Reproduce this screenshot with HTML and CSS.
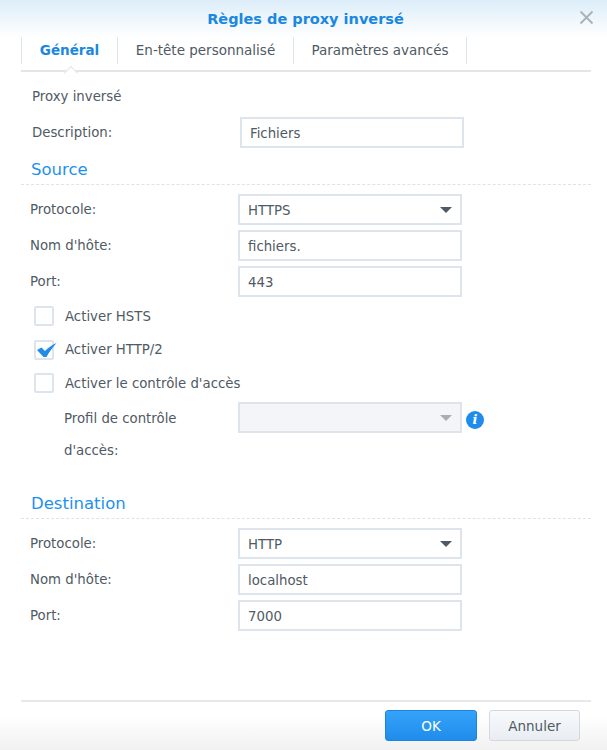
FILE: index.html
```html
<!DOCTYPE html>
<html lang="fr">
<head>
<meta charset="utf-8">
<title>Règles de proxy inversé</title>
<link rel="stylesheet" href="styles.css">
</head>
<body>
<div class="dialog">
  <header class="titlebar">
    <h1 class="title">Règles de proxy inversé</h1>
    <svg class="close" width="15" height="15" viewBox="0 0 15 15"><path d="M1.5 1.5l12 12M13.5 1.5l-12 12" stroke="#a9b1b8" stroke-width="1.8" fill="none"/></svg>
  </header>
  <nav class="tabs">
    <span class="tab tab-active">Général</span>
    <span class="tab tab-header">En-tête personnalisé</span>
    <span class="tab tab-advanced">Paramètres avancés</span>
  </nav>
  <main class="body">
    <div class="intro">
      <div class="intro-title">Proxy inversé</div>
      <div class="row row-desc">
        <span class="label">Description:</span>
        <span class="field field-desc">Fichiers</span>
      </div>
    </div>
    <section class="group group-source">
      <h2 class="heading">Source</h2>
      <div class="rows">
        <div class="row"><span class="label">Protocole:</span><span class="field">HTTPS<i class="caret"></i></span></div>
        <div class="row"><span class="label">Nom d'hôte:</span><span class="field">fichiers.</span></div>
        <div class="row"><span class="label">Port:</span><span class="field">443</span></div>
      </div>
      <div class="checks">
        <div class="check"><span class="box"></span>Activer HSTS</div>
        <div class="check"><span class="box"><svg class="tick" width="26" height="24" viewBox="0 0 26 24"><path d="M3 10L7.500 7.500L11 11C14.500 7.500 18 5 22.500 3C18 8 15 12.500 12.500 17L9.500 17Z" fill="#1f8ceb"/></svg></span>Activer HTTP/2</div>
        <div class="check"><span class="box"></span>Activer le contrôle d'accès</div>
      </div>
      <div class="profile">
        <span class="profile-label">Profil de contrôle d'accès:</span>
        <span class="field field-off"><i class="caret caret-off"></i></span>
        <span class="info">i</span>
      </div>
    </section>
    <section class="group group-dest">
      <h2 class="heading">Destination</h2>
      <div class="rows">
        <div class="row"><span class="label">Protocole:</span><span class="field">HTTP<i class="caret"></i></span></div>
        <div class="row"><span class="label">Nom d'hôte:</span><span class="field">localhost</span></div>
        <div class="row"><span class="label">Port:</span><span class="field">7000</span></div>
      </div>
    </section>
  </main>
  <footer class="footer">
    <button class="btn btn-ok">OK</button>
    <button class="btn btn-cancel">Annuler</button>
  </footer>
</div>
</body>
</html>
```
FILE: styles.css
```css
* { box-sizing: border-box; }
html, body { margin: 0; padding: 0; }
body {
  width: 607px;
  height: 750px;
  overflow: hidden;
  background: #fff;
  font-family: "DejaVu Sans", Verdana, sans-serif;
  font-size: 13.3px;
  color: #505a64;
}
.dialog { width: 607px; height: 750px; display: flex; flex-direction: column; }

.titlebar {
  height: 37px;
  flex: none;
  display: flex;
  align-items: center;
  justify-content: center;
  position: relative;
  background: linear-gradient(#dcedf9, #ffffff);
}
.title { margin: 0; padding-left: 4px; font-size: 14.5px; font-weight: 700; color: #1a87e0; }
.close { position: absolute; left: 579px; top: 10px; }

.tabs {
  height: 35px;
  flex: none;
  margin: 0 16px 0 21px;
  padding-bottom: 8px;
  display: flex;
  border-bottom: 2px solid #e3e6e9;
  position: relative;
  font-size: 13.5px;
}
.tab {
  height: 27px;
  display: flex;
  align-items: center;
  justify-content: center;
  padding-bottom: 2px;
  border-right: 1px solid #dde4ea;
}
.tab-header { width: 176px; }
.tab-advanced { width: 173px; }
.tab-active {
  width: 97px;
  border-left: 1px solid #dde4ea;
  color: #1a87e0;
  font-weight: 700;
  position: relative;
}
.tab-active::after {
  content: "";
  position: absolute;
  left: 44px;
  top: 31px;
  width: 9px;
  height: 9px;
  background: #fff;
  border-left: 1px solid #e3e6e9;
  border-top: 1px solid #e3e6e9;
  transform: rotate(45deg);
}

.body { flex: 1; padding: 0 16px 0 21px; }
.intro { padding: 0 0 0 11px; }
.intro-title { height: 18px; line-height: 18px; margin-top: 16px; }
.row { display: flex; align-items: flex-start; height: 31px; }
.row-desc { margin-top: 11px; }
.label { width: 208px; line-height: 32px; }
.field {
  width: 224px;
  height: 31px;
  line-height: 29px;
  padding-left: 8px;
  background: #fff;
  border: 2px solid #dde4ec;
  position: relative;
  display: block;
}
.group-source { margin-top: 8px; }
.group-dest { margin-top: 23px; }
.heading {
  margin: 0;
  height: 29px;
  padding: 0 0 0 10px;
  font-size: 16.5px;
  font-weight: 400;
  line-height: 28px;
  color: #1e90f0;
  border-bottom: 1px dashed #dce3e9;
}
.rows { padding: 9px 0 0 9px; display: flex; flex-direction: column; gap: 5px; }
.caret {
  position: absolute;
  right: 8px;
  top: 11px;
  width: 0;
  height: 0;
  border-left: 6px solid transparent;
  border-right: 6px solid transparent;
  border-top: 6px solid #505a64;
}
.caret-off { border-top-color: #a8aeb4; }
.checks { padding: 9px 0 0 13px; display: flex; flex-direction: column; gap: 13.7px; }
.check { display: flex; align-items: center; height: 20px; }
.box {
  width: 20px;
  height: 20px;
  margin-right: 11px;
  border: 2px solid #dde4ec;
  border-radius: 2px;
  position: relative;
  flex: none;
}
.tick { position: absolute; left: -2px; top: -2px; }
.profile { display: flex; padding: 9px 0 0 9px; position: relative; }
.profile-label { width: 208px; padding: 1px 31px 0 34px; line-height: 32px; }
.field-off { background: #f3f5f8; flex: none; }
.info {
  width: 18px;
  height: 18px;
  margin: 9px 0 0 4px;
  border-radius: 50%;
  background: #1f8ceb;
  color: #fff;
  font: italic 700 13px/18px "DejaVu Serif", serif;
  text-align: center;
  flex: none;
}

.footer {
  height: 50px;
  flex: none;
  display: flex;
  justify-content: flex-end;
  gap: 12px;
  padding: 10px 27px 0 0;
  position: relative;
  background: linear-gradient(#ffffff 30%, #f1f1f1);
}
.footer::before {
  content: "";
  position: absolute;
  left: 21px;
  right: 16px;
  top: 0;
  height: 2px;
  background: #e6e8ea;
}
.btn {
  width: 92px;
  height: 31px;
  border-radius: 3px;
  font: 13.5px "DejaVu Sans", Verdana, sans-serif;
  padding: 0;
}
.btn-ok { background: linear-gradient(#35a3fb, #1f8ceb); border: 1px solid #1c84dd; color: #fff; }
.btn-cancel { width: 91px; background: linear-gradient(#f8fafc, #e9edf2); border: 1px solid #d3d9df; color: #505a64; }
```
